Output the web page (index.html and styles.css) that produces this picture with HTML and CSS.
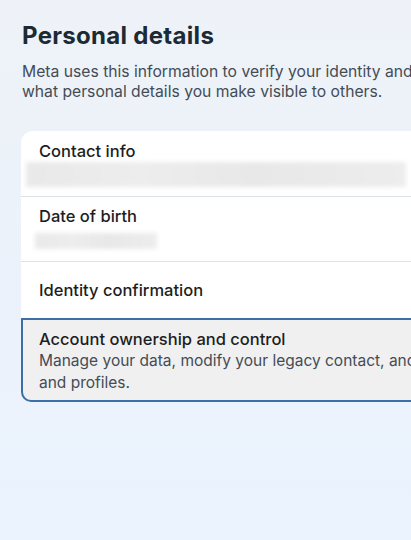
FILE: index.html
```html
<!DOCTYPE html>
<html lang="en">
<head>
<meta charset="utf-8">
<title>Personal details</title>
<link rel="stylesheet" href="styles.css">
</head>
<body>
<main class="page">
  <h1 class="title">Personal details</h1>
  <p class="intro"><span class="line">Meta uses this information to verify your identity and</span><span class="line">what personal details you make visible to others.</span></p>
  <section class="card">
    <div class="row row-contact">
      <div class="row-title">Contact info</div>
      <div class="blur blur-wide"></div>
    </div>
    <div class="row row-dob">
      <div class="row-title">Date of birth</div>
      <div class="blur blur-short"></div>
    </div>
    <div class="row row-identity">
      <div class="row-title">Identity confirmation</div>
    </div>
    <div class="row row-account">
      <div class="row-title">Account ownership and control</div>
      <p class="row-desc"><span class="line">Manage your data, modify your legacy contact, and</span><span class="line">and profiles.</span></p>
    </div>
  </section>
</main>
</body>
</html>
```

FILE: styles.css
```css
html, body {
  margin: 0;
  padding: 0;
  width: 411px;
  height: 540px;
  overflow: hidden;
}
body {
  background: linear-gradient(180deg, #eef2f8 0%, #ecf2fb 50%, #eaf3fe 100%);
  font-family: Inter, "Noto Sans", sans-serif;
  color: #1c2b33;
}
.page {
  width: 460px;
  padding: 22px 0 0 21px;
  box-sizing: border-box;
}
.title {
  margin: 0 0 0 1px;
  font-size: 24px;
  font-weight: 700;
  line-height: 28px;
  color: #1c2b33;
  letter-spacing: 0.3px;
}
.intro {
  margin: 12px 0 0 1px;
  font-size: 15.7px;
  line-height: 20px;
  color: #444c55;
}
.line {
  display: block;
  white-space: nowrap;
}
.card {
  margin-top: 29px;
  background: #ffffff;
  border-radius: 12px 0 0 12px;
}
.row {
  display: flex;
  flex-direction: column;
  box-sizing: border-box;
  padding-left: 18px;
  border-bottom: 1px solid #dde2e6;
}
.row-title {
  font-size: 16.5px;
  font-weight: 500;
  line-height: 20px;
  color: #1c1e21;
}
.row-contact {
  height: 66px;
  padding-top: 10px;
}
.blur {
  background: linear-gradient(90deg, #e9e9ea 0%, #ededee 30%, #e8e8e9 60%, #ededee 100%);
  filter: blur(2px);
}
.blur-wide {
  margin: 1px 0 0 -13px;
  width: 380px;
  height: 25px;
}
.row-dob {
  height: 65px;
  padding-top: 9px;
}
.blur-short {
  margin: 7px 0 0 -4px;
  width: 122px;
  height: 16px;
}
.row-identity {
  height: 56px;
  justify-content: center;
  border-bottom: none;
}
.row-account {
  background: #f0f0f1;
  border: 2px solid #3d6fa6;
  border-radius: 0 0 0 10px;
  padding: 9px 0 6px 16px;
}
.row-desc {
  margin: 1px 0 0;
  font-size: 15.5px;
  line-height: 22px;
  color: #444c55;
}
```
